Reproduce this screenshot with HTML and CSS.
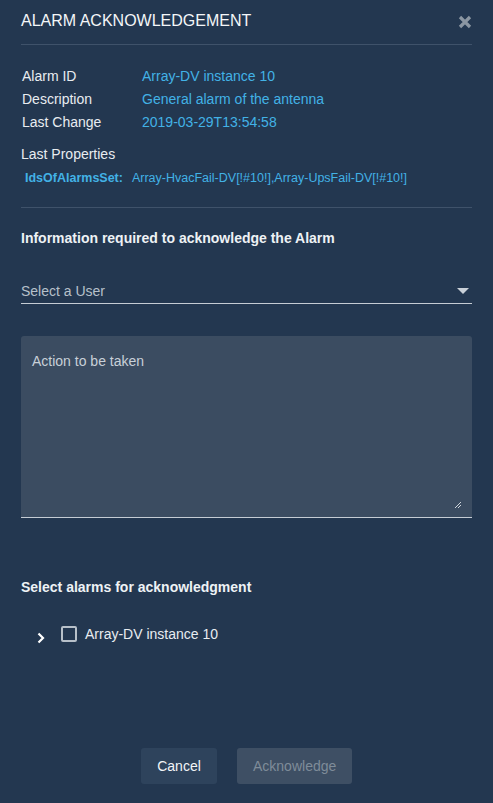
FILE: index.html
```html
<!DOCTYPE html>
<html>
<head>
<meta charset="utf-8">
<link rel="stylesheet" href="styles.css">
</head>
<body>
<div class="dialog">
  <div class="header">
    <span class="title">ALARM ACKNOWLEDGEMENT</span>
    <svg class="close" width="14" height="14" viewBox="0 0 14 14"><path d="M2 2L12 12M12 2L2 12" stroke="#8b96a2" stroke-width="3.2" stroke-linecap="butt"/></svg>
  </div>
  <div class="info">
    <div class="row"><span class="lbl">Alarm ID</span><span class="val">Array-DV instance 10</span></div>
    <div class="row"><span class="lbl">Description</span><span class="val">General alarm of the antenna</span></div>
    <div class="row"><span class="lbl">Last Change</span><span class="val">2019-03-29T13:54:58</span></div>
  </div>
  <div class="props-title">Last Properties</div>
  <div class="props"><span class="pkey">IdsOfAlarmsSet:</span><span class="pval">Array-HvacFail-DV[!#10!],Array-UpsFail-DV[!#10!]</span></div>
  <div class="divider"></div>
  <div class="section-title info-title">Information required to acknowledge the Alarm</div>
  <div class="select">
    <span>Select a User</span>
    <svg width="12" height="6" viewBox="0 0 12 6"><path d="M0 0H12L6 6Z" fill="#c9d0d8"/></svg>
  </div>
  <div class="textarea">
    <span>Action to be taken</span>
    <svg class="grip" width="8" height="8" viewBox="0 0 8 8"><path d="M7 1L1 7M7 4L4 7" stroke="#d0d6dc" stroke-width="1"/></svg>
  </div>
  <div class="section-title sel">Select alarms for acknowledgment</div>
  <div class="tree-row">
    <svg class="chev" width="8" height="12" viewBox="0 0 8 12"><path d="M1.5 1.5L6 6L1.5 10.5" stroke="#ffffff" stroke-width="2.2" fill="none"/></svg>
    <span class="cb"></span>
    <span class="tlabel">Array-DV instance 10</span>
  </div>
  <div class="buttons">
    <button class="btn cancel">Cancel</button>
    <button class="btn ack">Acknowledge</button>
  </div>
</div>
</body>
</html>
```
FILE: styles.css
```css
html, body {
  margin: 0;
  padding: 0;
  background: #233750;
  font-family: "Liberation Sans", Arial, sans-serif;
  color: #e4e9ee;
}
.dialog {
  width: 451px;
  height: 803px;
  padding: 0 21px;
  box-sizing: content-box;
  display: flex;
  flex-direction: column;
}
.header {
  display: flex;
  justify-content: space-between;
  align-items: center;
  height: 45px;
  border-bottom: 1px solid #3f526a;
  box-sizing: border-box;
  padding-top: 3px;
  padding-bottom: 6px;
}
.title {
  font-size: 16px;
  color: #f4f6f8;
}
.close {
  margin-top: 2px;
}
.info {
  padding-top: 19px;
  padding-left: 1px;
}
.row {
  display: flex;
  height: 23px;
  align-items: center;
  font-size: 14px;
}
.lbl {
  width: 120px;
  color: #e8ecf0;
}
.val {
  color: #42b2e6;
}
.props-title {
  margin-top: 12px;
  font-size: 14px;
  color: #e8ecf0;
  line-height: 18px;
}
.props {
  margin-top: 7px;
  padding-left: 4px;
  font-size: 12.5px;
  line-height: 16px;
  color: #42b2e6;
}
.pkey {
  font-weight: bold;
  margin-right: 9px;
}
.divider {
  margin-top: 21px;
  border-top: 1px solid #3f526a;
}
.section-title {
  font-size: 14px;
  font-weight: bold;
  color: #eef2f5;
  line-height: 17px;
}
.info-title {
  margin-top: 22px;
}
.select {
  margin-top: 31px;
  height: 25px;
  border-bottom: 1px solid #c5ccd4;
  display: flex;
  justify-content: space-between;
  align-items: center;
  font-size: 14px;
  color: #b6c0ca;
  box-sizing: content-box;
}
.select svg {
  margin-right: 3px;
}
.textarea {
  margin-top: 32px;
  height: 182px;
  background: #3b4c61;
  border-bottom: 1px solid #c5ccd4;
  border-radius: 3px 3px 0 0;
  position: relative;
  padding: 17px 11px;
  box-sizing: border-box;
  font-size: 14px;
  color: #c8d0d8;
}
.grip {
  position: absolute;
  right: 10px;
  bottom: 8px;
}
.sel {
  margin-top: 61px;
}
.tree-row {
  margin-top: 29px;
  display: flex;
  align-items: center;
  height: 18px;
  padding-left: 16px;
}
.chev {
  margin-top: 8px;
  margin-right: 16px;
}
.cb {
  width: 12px;
  height: 12px;
  border: 2px solid #b7c0c9;
  border-radius: 2px;
  margin-right: 8px;
}
.tlabel {
  font-size: 14px;
  color: #e8ecf0;
}
.buttons {
  margin-top: 105px;
  display: flex;
  justify-content: center;
  gap: 20px;
}
.btn {
  height: 36px;
  border: none;
  border-radius: 3px;
  font-family: "Liberation Sans", Arial, sans-serif;
  font-size: 14px;
  padding: 0 16px;
}
.cancel {
  background: #2e435c;
  color: #f2f5f8;
  width: 76px;
}
.ack {
  background: #3e4f64;
  color: #7f8c99;
  width: 115px;
}
```
